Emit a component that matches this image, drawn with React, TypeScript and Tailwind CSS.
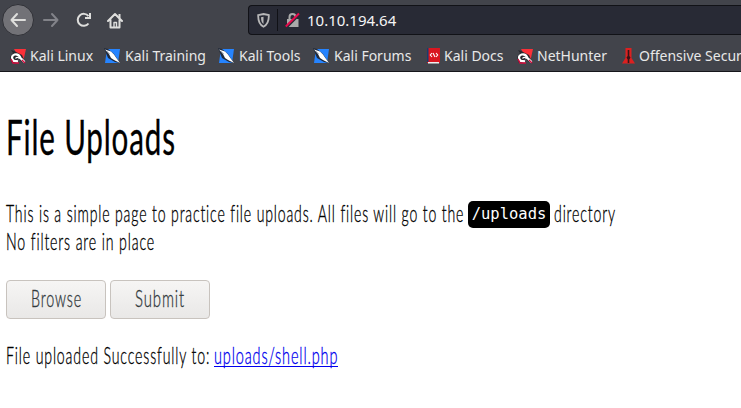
import { useLayoutEffect, useRef, useState } from "react";

/** Condenses a run of text horizontally so that it fills the given width. */
function Narrow({ text, width, className = "" }: { text: string; width: number; className?: string }) {
  const ref = useRef<HTMLSpanElement>(null);
  const [scale, setScale] = useState(0.7);
  useLayoutEffect(() => {
    const fit = () => {
      if (ref.current) setScale(width / ref.current.offsetWidth);
    };
    fit();
    document.fonts.ready.then(fit);
  }, [text, width]);
  return (
    <span className="inline-block shrink-0 whitespace-nowrap" style={{ width }}>
      <span ref={ref} className={`inline-block origin-left ${className}`} style={{ transform: `scaleX(${scale})` }}>
        {text}
      </span>
    </span>
  );
}

function DragonIcon() {
  return (
    <svg className="h-4 w-4 shrink-0" viewBox="0 0 16 16">
      <path d="M4 1h12l-2.5 11L8 8z" fill="#fb3038" />
      <path d="M1 2l3 1 4 2 4 2 3 7-3 0-4-4-3 5H2L0 9l3-4z" fill="#26262c" />
      <path d="M8 13.500L4 13c-3-2.500-2.500-5.500.5-6.500 3-.7 5 1 6 3.500l4 4" fill="none" stroke="#fff" strokeWidth="2.300" />
      <path d="M5.500 10.500c1-1.500 3-1.500 4 .3" fill="none" stroke="#fff" strokeWidth="1.300" />
      <path d="M1 11l2 4h6M12 12l3 3" fill="none" stroke="#d80a3d" strokeWidth="1.300" />
    </svg>
  );
}

function KnifeIcon() {
  return (
    <svg className="-ml-px mr-px h-4 w-4 shrink-0" viewBox="0 0 16 16">
      <path d="M3 1h13l-2 14H1z" fill="#2684ff" />
      <path d="M0 0l4 1 6 5 6 9-5-1-7-4z" fill="#202a3b" />
      <path d="M1 1.500l6 2 3 3 2 3 4 5.500-6-3-3-2-2-4z" fill="#fff" />
      <path d="M3 3l3 3" stroke="#a8b0bb" strokeWidth=".8" />
    </svg>
  );
}

function DocsIcon() {
  return (
    <svg className="h-4 w-[13px] shrink-0" viewBox="0 0 13 16">
      <path d="M0 0h13v15H0z" fill="#d91620" />
      <path d="M0 0h1.500v14H0z" fill="#183c70" />
      <path d="M1 14h11v1.500H1z" fill="#eee" />
      <path d="M5 5L3.300 7 5 9M9 5l1.700 2L9 9M6 5l2 4" fill="none" stroke="#fff" strokeWidth="1.100" />
    </svg>
  );
}

function OffensiveIcon() {
  return (
    <svg className="h-4 w-[13px] shrink-0" viewBox="0 0 13 16">
      <path d="M3.500 0h6v10l3.500 5.500H0L3.500 10z" fill="#dc2020" />
      <path d="M5.700 2h1.600v6l1.200 1.500-1.200 2V15H5.700v-3.500l-1.200-2L5.700 8z" fill="#351417" />
    </svg>
  );
}

function Bookmark({ icon, label, width }: { icon: React.ReactNode; label: string; width: string }) {
  return (
    <div className={`flex shrink-0 items-center gap-1 ${width}`}>
      {icon}
      <span className="whitespace-nowrap">{label}</span>
    </div>
  );
}

function Toolbar() {
  return (
    <header className="h-[72px] overflow-hidden border-b border-[#15161b] bg-[#42444b] font-['Noto_Sans',sans-serif] text-[#e8e8e8]">
      <div className="flex h-10 items-center pl-[2px]">
        <div className="flex h-8 w-8 shrink-0 items-center justify-center rounded-full border border-[#303137] bg-[#727277]">
          <svg className="h-4 w-4" viewBox="0 0 16 16" fill="none" stroke="#dededc" strokeWidth="2" strokeLinecap="round" strokeLinejoin="round">
            <path d="M15 8H1.500M7 2L1.500 8 7 14" />
          </svg>
        </div>
        <svg className="ml-[9px] h-4 w-4 shrink-0" viewBox="0 0 16 16" fill="none" stroke="#828389" strokeWidth="2" strokeLinecap="round" strokeLinejoin="round">
          <path d="M1 8h13.500M9 2l5.500 6L9 14" />
        </svg>
        <svg className="ml-[17px] h-4 w-4 shrink-0" viewBox="0 0 16 16" fill="none" stroke="#dededc" strokeWidth="2">
          <path d="M12.500 4.200A6 6 0 1 0 12.500 11.500" />
          <path d="M14 1v5H9" />
        </svg>
        <svg className="ml-[15px] h-[17px] w-[17px] shrink-0" viewBox="0 0 17 17" fill="none" stroke="#dededc" strokeWidth="2" strokeLinejoin="round">
          <path d="M1 9l7-7 7 7M3.500 8v7.500h9V8" strokeLinecap="round" />
          <path d="M7 15v-4.500h2.500V15" strokeWidth="1.400" />
          <path d="M12.500 2v4" strokeWidth="2" />
        </svg>
        <div className="ml-[124px] flex h-[30px] flex-1 items-center rounded-l-[4px] border border-r-0 border-[#111217] bg-[#282a35]">
          <svg className="ml-[8px] h-[15px] w-[13px] shrink-0" viewBox="0 0 13 15">
            <path d="M1.200 2.100L6.500 1l5.300 1.100c.2 5.400-.8 9.400-5.300 11.700C2 11.500 1 7.500 1.200 2.100z" fill="none" stroke="#b7b7b8" strokeWidth="1.800" />
            <path d="M6.500 3.700v7.300C4.500 9.500 4 7 4 4.200z" fill="#b7b7b8" />
          </svg>
          <span className="ml-[7px] h-[22px] w-px bg-[#101116]" />
          <svg className="ml-[7px] h-4 w-[15px] shrink-0" viewBox="0 0 15 16">
            <path d="M4.500 8V5a3 3 0 0 1 6 0v3" fill="none" stroke="#aaa" strokeWidth="2" />
            <path d="M2 7h11.500v8H2z" fill="#aaa" />
            <path d="M1 15.500L14 2.500" stroke="#282a35" strokeWidth="3" />
            <path d="M.8 14.500L14 1.500" stroke="#e90b4d" strokeWidth="2" />
          </svg>
          <span className="ml-[7px] text-[15px] leading-5 text-[#f5f5f5]">10.10.194.64</span>
        </div>
      </div>
      <nav className="flex h-8 items-center pl-[10px] text-[14px] leading-5">
        <Bookmark icon={<DragonIcon />} label="Kali Linux" width="w-[95px]" />
        <Bookmark icon={<KnifeIcon />} label="Kali Training" width="w-[114px]" />
        <Bookmark icon={<KnifeIcon />} label="Kali Tools" width="w-[95px]" />
        <Bookmark icon={<KnifeIcon />} label="Kali Forums" width="w-[113px]" />
        <Bookmark icon={<DocsIcon />} label="Kali Docs" width="w-[90px]" />
        <Bookmark icon={<DragonIcon />} label="NetHunter" width="w-[105px]" />
        <Bookmark icon={<OffensiveIcon />} label="Offensive Secur" width="w-[130px]" />
      </nav>
    </header>
  );
}

const buttonStyle =
  "flex h-[39px] w-[100px] items-center justify-center rounded-[4px] border border-[#c8c3be] bg-linear-to-b from-[#f6f5f4] to-[#e9e8e7] text-[#333a3d]";

export default function App() {
  return (
    <div className="h-[408px] w-[741px] overflow-hidden bg-white font-['Lato','Open_Sans',sans-serif] text-black">
      <Toolbar />
      <main className="pl-[6px] text-[23px] leading-[28px] font-light tracking-[0.06em] [font-variant-ligatures:none] [-webkit-text-stroke:0.35px]">
        <h1 className="mt-[35px] flex h-[60px] text-[48px] leading-[60px] font-normal">
          <Narrow text="File Uploads" width={170} />
        </h1>
        <div className="mt-[33px] flex h-[28px] items-center">
          <span className="-mt-[2px] flex">
            <Narrow text="This is a simple page to practice file uploads. All files will go to the" width={458} />
          </span>
          <code className="ml-[4px] flex h-[27px] w-[82px] shrink-0 items-center justify-center rounded-[5px] bg-black font-['DejaVu_Sans_Mono',monospace] text-[15.5px] font-normal tracking-normal text-white [-webkit-text-stroke:0px]">
            /uploads
          </code>
          <span className="-mt-[2px] ml-[4px] flex">
            <Narrow text="directory" width={62} />
          </span>
        </div>
        <p className="-mt-px flex h-[28px]">
          <Narrow text="No filters are in place" width={149} />
        </p>
        <div className="mt-[25px] flex gap-[4px]">
          <button className={buttonStyle}>
            <span className="-mt-[3px]">
              <Narrow text="Browse" width={51} />
            </span>
          </button>
          <button className={buttonStyle}>
            <span className="-mt-[3px]">
              <Narrow text="Submit" width={50} />
            </span>
          </button>
        </div>
        <p className="mt-[22px] flex h-[28px]">
          <Narrow text="File uploaded Successfully to:" width={204} />
          <a href="#" className="ml-[4px] h-[26px] border-b border-[#0000ee] text-[#0000ee]">
            <Narrow text="uploads/shell.php" width={124} />
          </a>
        </p>
      </main>
    </div>
  );
}
